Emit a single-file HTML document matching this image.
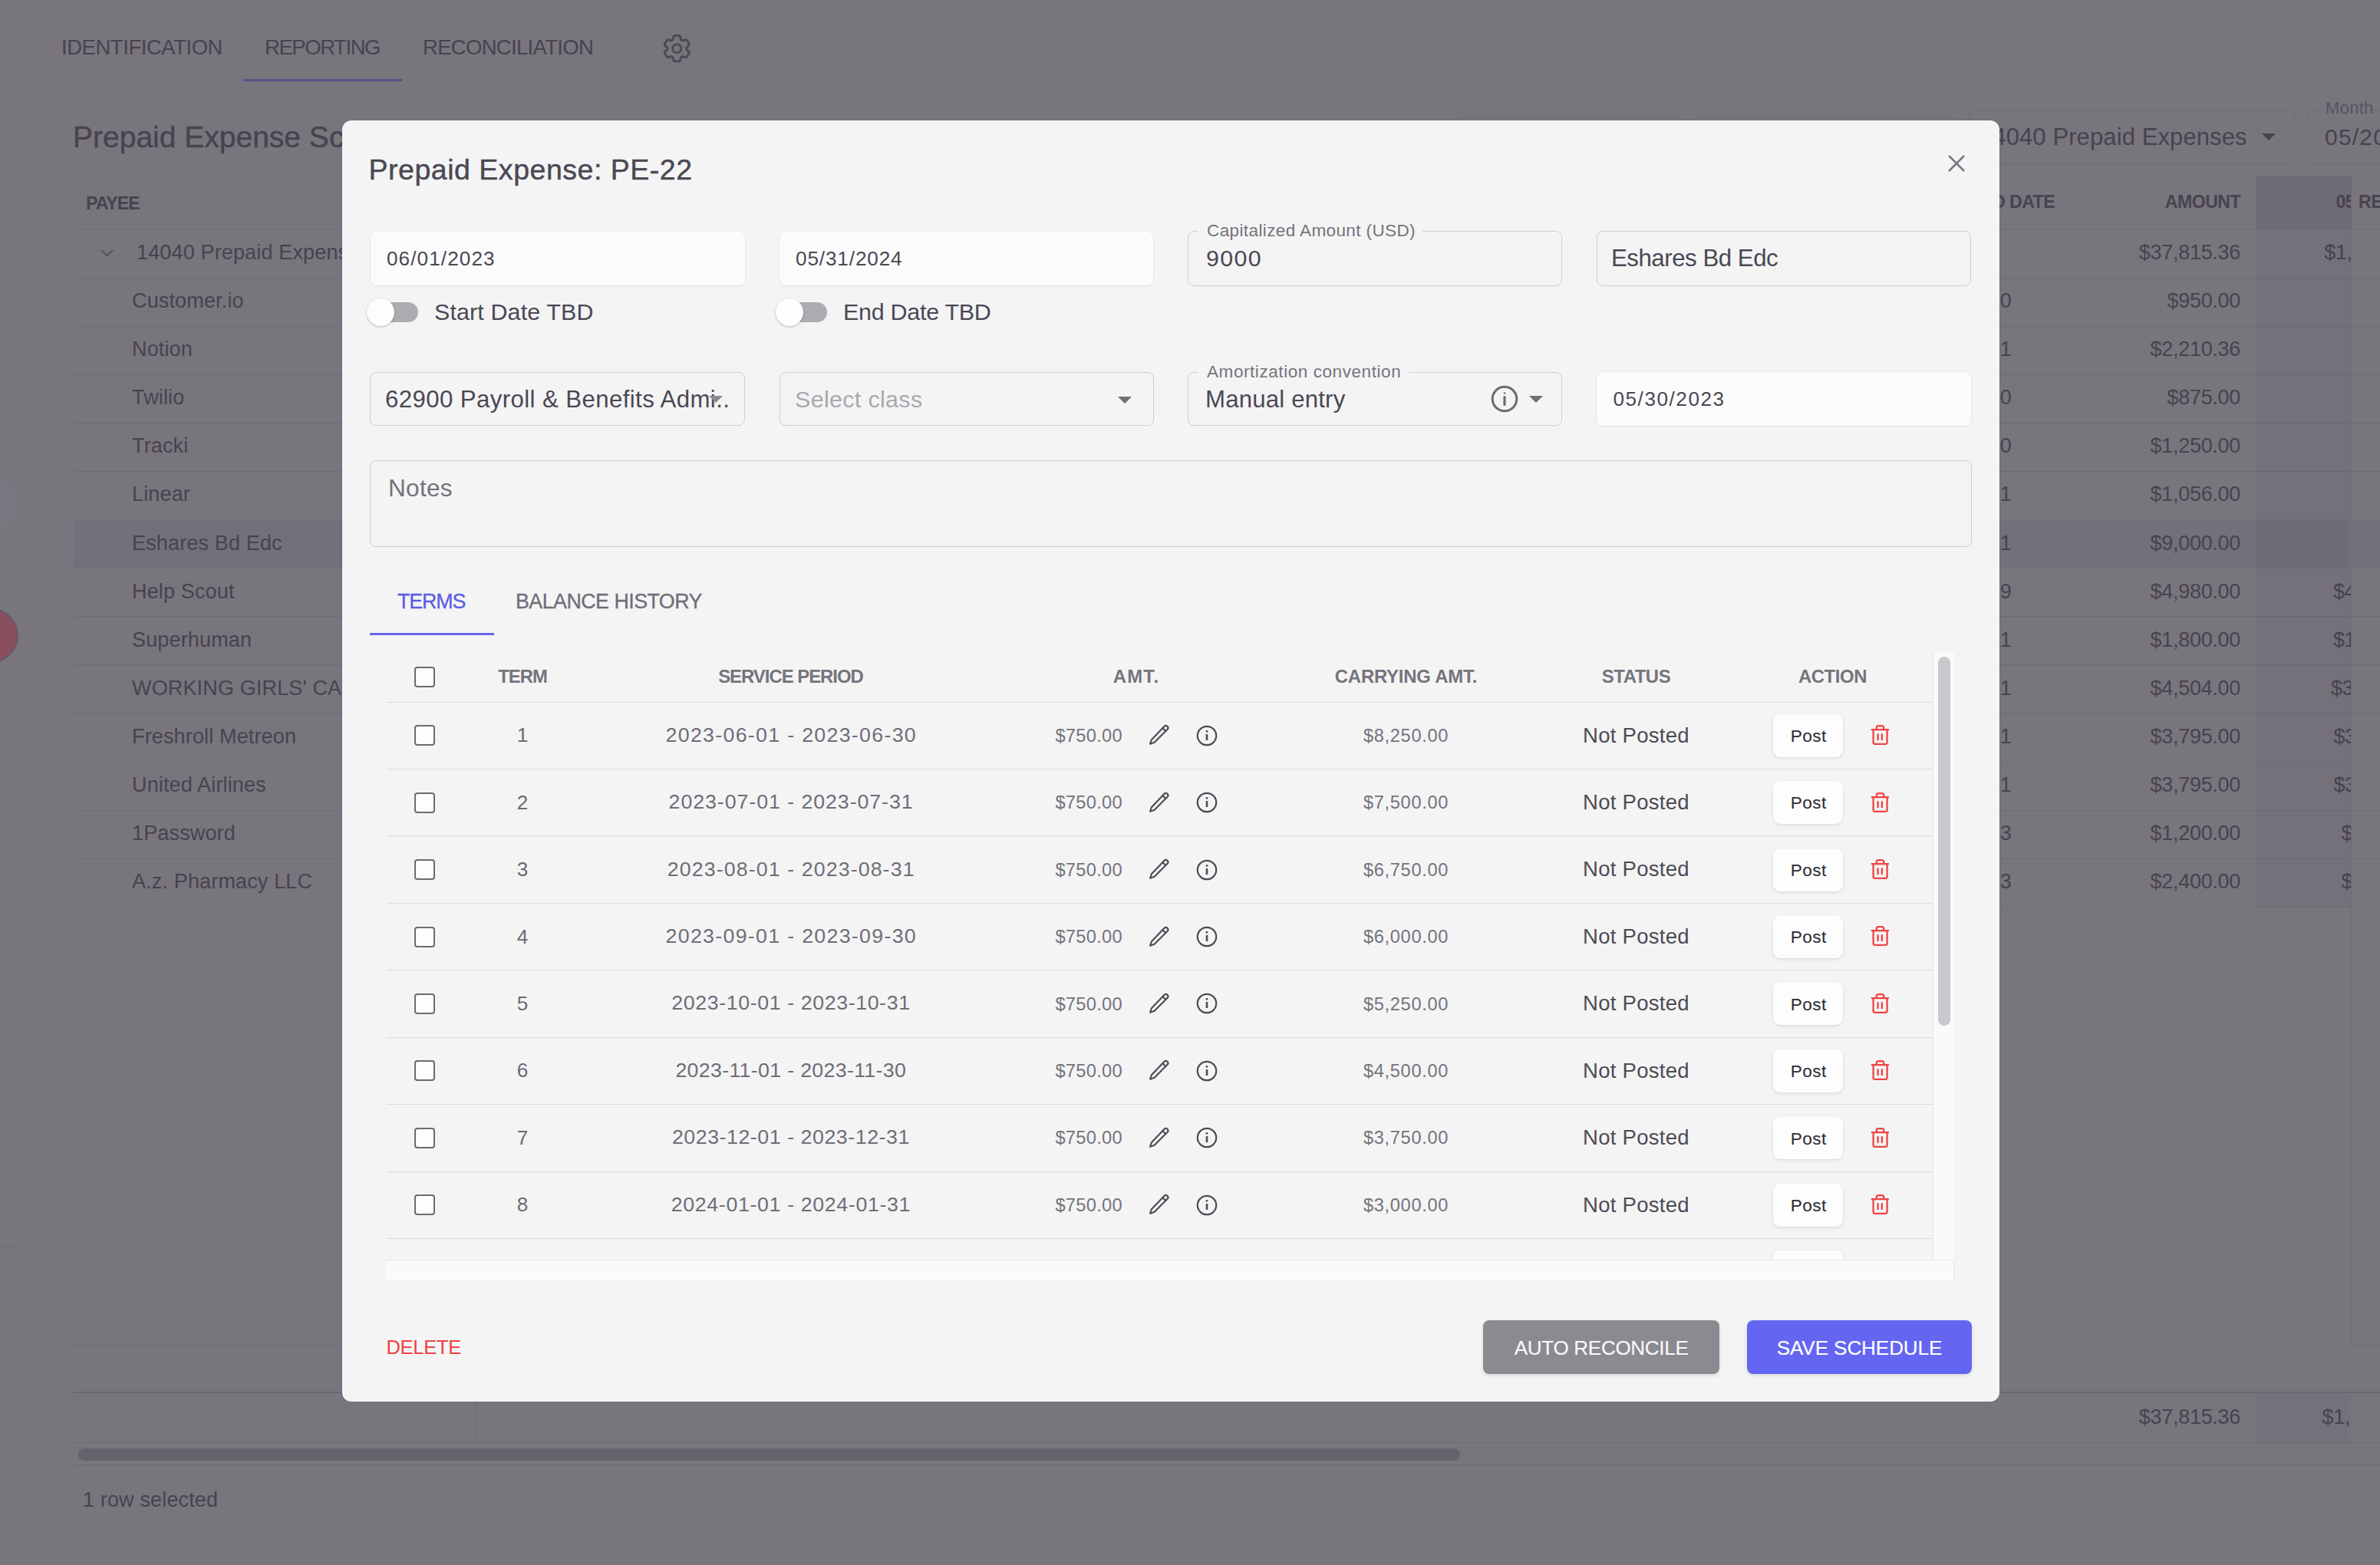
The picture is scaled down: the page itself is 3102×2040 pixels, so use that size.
<!DOCTYPE html>
<html><head><meta charset="utf-8"><style>
html,body{margin:0;padding:0;}
body{width:3102px;height:2040px;overflow:hidden;position:relative;background:#78757d;font-family:"Liberation Sans", sans-serif;}
.t{position:absolute;white-space:nowrap;line-height:1;}
.r{position:absolute;}
</style></head><body>
<div class="r" style="left:-20px;top:20px;width:29px;height:72px;border:1px solid #6f6c75;border-radius:10px;"></div>
<div class="r" style="left:-25px;top:619px;width:48px;height:70px;border-radius:50%;background:#7a7680;"></div>
<div class="r" style="left:-47px;top:792.5px;width:71px;height:71px;border-radius:50%;background:#8a4f5d;box-sizing:border-box;border:2px solid #66596a;"></div>
<div class="r" style="left:0px;top:1625px;width:24px;height:1px;background:#6f6c75;"></div>
<div class="t" style="font-size:27.5px;color:#47434f;letter-spacing:-0.46px;top:47.8px;left:80px;">IDENTIFICATION</div>
<div class="t" style="font-size:27.5px;color:#47434f;letter-spacing:-1.44px;top:47.8px;left:345px;">REPORTING</div>
<div class="t" style="font-size:27.5px;color:#47434f;letter-spacing:-0.69px;top:47.8px;left:551px;">RECONCILIATION</div>
<div class="r" style="left:317px;top:103px;width:207px;height:3px;background:#55518a;"></div>
<svg class="r" style="left:859.8px;top:41.2px;width:44.5px;height:44.5px" viewBox="0 0 24 24" fill="none" stroke="#4d4a55" stroke-width="1.6" stroke-linecap="round" stroke-linejoin="round"><path d="M9.594 3.94c.09-.542.56-.94 1.11-.94h2.593c.55 0 1.02.398 1.11.94l.213 1.281c.063.374.313.686.645.87.074.04.147.083.22.127.325.196.72.257 1.075.124l1.217-.456a1.125 1.125 0 0 1 1.37.49l1.296 2.247a1.125 1.125 0 0 1-.26 1.431l-1.003.827c-.293.241-.438.613-.43.992a7.723 7.723 0 0 1 0 .255c-.008.378.137.75.43.991l1.004.827c.424.35.534.955.26 1.43l-1.298 2.247a1.125 1.125 0 0 1-1.369.491l-1.217-.456c-.355-.133-.75-.072-1.076.124a6.47 6.47 0 0 1-.22.128c-.331.183-.581.495-.644.869l-.213 1.281c-.09.543-.56.94-1.11.94h-2.594c-.55 0-1.019-.398-1.11-.94l-.213-1.281c-.062-.374-.312-.686-.644-.87a6.52 6.52 0 0 1-.22-.127c-.325-.196-.72-.257-1.076-.124l-1.217.456a1.125 1.125 0 0 1-1.369-.49l-1.297-2.247a1.125 1.125 0 0 1 .26-1.431l1.004-.827c.292-.24.437-.613.43-.991a6.932 6.932 0 0 1 0-.255c.007-.38-.138-.751-.43-.992l-1.004-.827a1.125 1.125 0 0 1-.26-1.43l1.297-2.247a1.125 1.125 0 0 1 1.37-.491l1.216.456c.356.133.751.072 1.076-.124.072-.044.146-.086.22-.128.332-.183.582-.495.644-.869l.214-1.28Z"/><path d="M15 12a3 3 0 1 1-6 0 3 3 0 0 1 6 0Z"/></svg>
<div class="r" style="left:64px;top:123px;width:3200px;height:1900px;border-radius:14px;border:1px solid rgba(0,0,0,0.02);box-shadow:0 1px 3px rgba(0,0,0,0.03);"></div>
<div class="t" style="font-size:39px;color:#47434f;letter-spacing:0px;top:159.0px;-webkit-text-stroke:0.4px #47434f;left:95px;">Prepaid Expense Schedule</div>
<div class="r" style="left:1897px;top:152px;width:295px;height:60px;border:1px solid #6f6c75;border-radius:10px;"></div>
<div class="r" style="left:2207px;top:152px;width:344px;height:60px;border:1px solid #6f6c75;border-radius:10px;"></div>
<div class="r" style="left:2566px;top:143px;width:425px;height:70px;border:1px solid #6f6c75;border-radius:10px;"></div>
<div class="t" style="font-size:31px;color:#47434f;letter-spacing:0.1px;top:162.8px;left:2580px;">14040 Prepaid Expenses</div>
<div class="r" style="left:2948px;top:174px;width:0;height:0;border-left:9px solid transparent;border-right:9px solid transparent;border-top:9px solid #47434f;"></div>
<div class="r" style="left:3006px;top:143px;width:200px;height:70px;border:1px solid #6f6c75;border-radius:10px;"></div>
<div class="r" style="left:3025px;top:130px;width:62px;height:20px;background:#78757d;"></div>
<div class="t" style="font-size:22px;color:#57535f;letter-spacing:0.3px;top:130.4px;left:3031px;">Month</div>
<div class="t" style="font-size:30px;color:#47434f;letter-spacing:1.2px;top:163.7px;left:3030px;">05/2023</div>
<div class="r" style="left:96px;top:229px;width:3100px;height:1524px;border-top:1px solid rgba(0,0,0,0.03);border-left:1px solid rgba(0,0,0,0.03);border-radius:10px 0 0 0;"></div>
<div class="r" style="left:2940px;top:229px;width:124px;height:69px;background:#6f6b76;"></div>
<div class="r" style="left:3064px;top:229px;width:1px;height:1524px;background:#6f6c75;"></div>
<div class="t" style="font-size:23.2px;color:#47434f;letter-spacing:-1.0px;top:253.9px;font-weight:700;left:112px;">PAYEE</div>
<div class="t" style="font-size:23.2px;color:#47434f;letter-spacing:-0.6px;top:252.4px;font-weight:700;left:1478px;width:1200px;text-align:right;">END DATE</div>
<div class="t" style="font-size:23.2px;color:#47434f;letter-spacing:-0.6px;top:252.4px;font-weight:700;left:1720px;width:1200px;text-align:right;">AMOUNT</div>
<div class="r" style="left:2940px;top:229px;width:124px;height:69px;overflow:hidden">
<div class="t" style="font-size:23.2px;color:#47434f;letter-spacing:-0.6px;top:23.4px;font-weight:700;left:104.5px;">05/2023</div>
</div>
<div class="t" style="font-size:23.2px;color:#47434f;letter-spacing:-0.6px;top:252.4px;font-weight:700;left:3074px;">RECONCILED</div>
<div class="r" style="left:96px;top:298px;width:3100px;height:1px;background:#6f6c75;"></div>
<svg class="r" style="left:130px;top:324.4px;width:19px;height:12px" viewBox="0 0 19 12" fill="none" stroke="#57535f" stroke-width="2.2"><path d="M2 2l7.5 7.5L17 2"/></svg>
<div class="t" style="font-size:27px;color:#47434f;letter-spacing:0.15px;top:315.9px;left:178px;">14040 Prepaid Expenses</div>
<div class="t" style="font-size:27px;color:#47434f;letter-spacing:-0.3px;top:315.9px;left:1720px;width:1200px;text-align:right;">$37,815.36</div>
<div class="r" style="left:2940px;top:298.4px;width:124px;height:63.1px;overflow:hidden">
<div class="t" style="font-size:27px;color:#47434f;letter-spacing:-0.3px;top:17.5px;left:89.19999999999982px;">$1,750.00</div>
</div>
<div class="r" style="left:96px;top:361.5px;width:3100px;height:1px;background:#6f6c75;"></div>
<div class="t" style="font-size:27px;color:#47434f;letter-spacing:0.15px;top:379.0px;left:172px;">Customer.io</div>
<div class="t" style="font-size:27px;color:#47434f;letter-spacing:-0.3px;top:379.0px;left:1421.5px;width:1200px;text-align:right;">05/31/2020</div>
<div class="t" style="font-size:27px;color:#47434f;letter-spacing:-0.3px;top:379.0px;left:1720px;width:1200px;text-align:right;">$950.00</div>
<div class="r" style="left:96px;top:424.6px;width:3100px;height:1px;background:#6f6c75;"></div>
<div class="t" style="font-size:27px;color:#47434f;letter-spacing:0.15px;top:442.1px;left:172px;">Notion</div>
<div class="t" style="font-size:27px;color:#47434f;letter-spacing:-0.3px;top:442.1px;left:1421.5px;width:1200px;text-align:right;">05/31/2021</div>
<div class="t" style="font-size:27px;color:#47434f;letter-spacing:-0.3px;top:442.1px;left:1720px;width:1200px;text-align:right;">$2,210.36</div>
<div class="r" style="left:96px;top:487.7px;width:3100px;height:1px;background:#6f6c75;"></div>
<div class="t" style="font-size:27px;color:#47434f;letter-spacing:0.15px;top:505.2px;left:172px;">Twilio</div>
<div class="t" style="font-size:27px;color:#47434f;letter-spacing:-0.3px;top:505.2px;left:1421.5px;width:1200px;text-align:right;">05/31/2020</div>
<div class="t" style="font-size:27px;color:#47434f;letter-spacing:-0.3px;top:505.2px;left:1720px;width:1200px;text-align:right;">$875.00</div>
<div class="r" style="left:96px;top:550.8px;width:3100px;height:1px;background:#6f6c75;"></div>
<div class="t" style="font-size:27px;color:#47434f;letter-spacing:0.15px;top:568.3px;left:172px;">Tracki</div>
<div class="t" style="font-size:27px;color:#47434f;letter-spacing:-0.3px;top:568.3px;left:1421.5px;width:1200px;text-align:right;">05/31/2020</div>
<div class="t" style="font-size:27px;color:#47434f;letter-spacing:-0.3px;top:568.3px;left:1720px;width:1200px;text-align:right;">$1,250.00</div>
<div class="r" style="left:96px;top:613.9px;width:3100px;height:1px;background:#6f6c75;"></div>
<div class="t" style="font-size:27px;color:#47434f;letter-spacing:0.15px;top:631.4px;left:172px;">Linear</div>
<div class="t" style="font-size:27px;color:#47434f;letter-spacing:-0.3px;top:631.4px;left:1421.5px;width:1200px;text-align:right;">05/31/2021</div>
<div class="t" style="font-size:27px;color:#47434f;letter-spacing:-0.3px;top:631.4px;left:1720px;width:1200px;text-align:right;">$1,056.00</div>
<div class="r" style="left:96px;top:677.0px;width:3100px;height:1px;background:#6f6c75;"></div>
<div class="r" style="left:96px;top:677.0px;width:3100px;height:63.1px;background:#72707b;"></div>
<div class="t" style="font-size:27px;color:#47434f;letter-spacing:0.15px;top:694.5px;left:172px;">Eshares Bd Edc</div>
<div class="t" style="font-size:27px;color:#47434f;letter-spacing:-0.3px;top:694.5px;left:1421.5px;width:1200px;text-align:right;">05/31/2021</div>
<div class="t" style="font-size:27px;color:#47434f;letter-spacing:-0.3px;top:694.5px;left:1720px;width:1200px;text-align:right;">$9,000.00</div>
<div class="r" style="left:96px;top:740.1px;width:3100px;height:1px;background:#6f6c75;"></div>
<div class="t" style="font-size:27px;color:#47434f;letter-spacing:0.15px;top:757.6px;left:172px;">Help Scout</div>
<div class="t" style="font-size:27px;color:#47434f;letter-spacing:-0.3px;top:757.6px;left:1421.5px;width:1200px;text-align:right;">05/31/2029</div>
<div class="t" style="font-size:27px;color:#47434f;letter-spacing:-0.3px;top:757.6px;left:1720px;width:1200px;text-align:right;">$4,980.00</div>
<div class="r" style="left:2940px;top:740.1px;width:124px;height:63.1px;overflow:hidden">
<div class="t" style="font-size:27px;color:#47434f;letter-spacing:-0.3px;top:17.5px;left:100.90000000000009px;">$415.00</div>
</div>
<div class="r" style="left:96px;top:803.1999999999999px;width:3100px;height:1px;background:#6f6c75;"></div>
<div class="t" style="font-size:27px;color:#47434f;letter-spacing:0.15px;top:820.7px;left:172px;">Superhuman</div>
<div class="t" style="font-size:27px;color:#47434f;letter-spacing:-0.3px;top:820.7px;left:1421.5px;width:1200px;text-align:right;">05/31/2021</div>
<div class="t" style="font-size:27px;color:#47434f;letter-spacing:-0.3px;top:820.7px;left:1720px;width:1200px;text-align:right;">$1,800.00</div>
<div class="r" style="left:2940px;top:803.2px;width:124px;height:63.1px;overflow:hidden">
<div class="t" style="font-size:27px;color:#47434f;letter-spacing:-0.3px;top:17.5px;left:100.90000000000009px;">$150.00</div>
</div>
<div class="r" style="left:96px;top:866.3000000000001px;width:3100px;height:1px;background:#6f6c75;"></div>
<div class="t" style="font-size:27px;color:#47434f;letter-spacing:0.15px;top:883.8px;left:172px;">WORKING GIRLS&#x27; CAFE</div>
<div class="t" style="font-size:27px;color:#47434f;letter-spacing:-0.3px;top:883.8px;left:1421.5px;width:1200px;text-align:right;">05/31/2021</div>
<div class="t" style="font-size:27px;color:#47434f;letter-spacing:-0.3px;top:883.8px;left:1720px;width:1200px;text-align:right;">$4,504.00</div>
<div class="r" style="left:2940px;top:866.3px;width:124px;height:63.1px;overflow:hidden">
<div class="t" style="font-size:27px;color:#47434f;letter-spacing:-0.3px;top:17.5px;left:97.90000000000009px;">$375.33</div>
</div>
<div class="r" style="left:96px;top:929.4px;width:3100px;height:1px;background:#6f6c75;"></div>
<div class="t" style="font-size:27px;color:#47434f;letter-spacing:0.15px;top:946.9px;left:172px;">Freshroll Metreon</div>
<div class="t" style="font-size:27px;color:#47434f;letter-spacing:-0.3px;top:946.9px;left:1421.5px;width:1200px;text-align:right;">05/31/2021</div>
<div class="t" style="font-size:27px;color:#47434f;letter-spacing:-0.3px;top:946.9px;left:1720px;width:1200px;text-align:right;">$3,795.00</div>
<div class="r" style="left:2940px;top:929.4px;width:124px;height:63.1px;overflow:hidden">
<div class="t" style="font-size:27px;color:#47434f;letter-spacing:-0.3px;top:17.5px;left:101.40000000000009px;">$316.25</div>
</div>
<div class="r" style="left:96px;top:992.5px;width:3100px;height:1px;background:#6f6c75;"></div>
<div class="t" style="font-size:27px;color:#47434f;letter-spacing:0.15px;top:1010.0px;left:172px;">United Airlines</div>
<div class="t" style="font-size:27px;color:#47434f;letter-spacing:-0.3px;top:1010.0px;left:1421.5px;width:1200px;text-align:right;">05/31/2021</div>
<div class="t" style="font-size:27px;color:#47434f;letter-spacing:-0.3px;top:1010.0px;left:1720px;width:1200px;text-align:right;">$3,795.00</div>
<div class="r" style="left:2940px;top:992.5px;width:124px;height:63.1px;overflow:hidden">
<div class="t" style="font-size:27px;color:#47434f;letter-spacing:-0.3px;top:17.5px;left:101.40000000000009px;">$316.25</div>
</div>
<div class="r" style="left:96px;top:1055.6px;width:3100px;height:1px;background:#6f6c75;"></div>
<div class="t" style="font-size:27px;color:#47434f;letter-spacing:0.15px;top:1073.1px;left:172px;">1Password</div>
<div class="t" style="font-size:27px;color:#47434f;letter-spacing:-0.3px;top:1073.1px;left:1421.5px;width:1200px;text-align:right;">05/31/2023</div>
<div class="t" style="font-size:27px;color:#47434f;letter-spacing:-0.3px;top:1073.1px;left:1720px;width:1200px;text-align:right;">$1,200.00</div>
<div class="r" style="left:2940px;top:1055.6px;width:124px;height:63.1px;overflow:hidden">
<div class="t" style="font-size:27px;color:#47434f;letter-spacing:-0.3px;top:17.5px;left:111.5px;">$75.00</div>
</div>
<div class="r" style="left:96px;top:1118.6999999999998px;width:3100px;height:1px;background:#6f6c75;"></div>
<div class="t" style="font-size:27px;color:#47434f;letter-spacing:0.15px;top:1136.2px;left:172px;">A.z. Pharmacy LLC</div>
<div class="t" style="font-size:27px;color:#47434f;letter-spacing:-0.3px;top:1136.2px;left:1421.5px;width:1200px;text-align:right;">05/31/2023</div>
<div class="t" style="font-size:27px;color:#47434f;letter-spacing:-0.3px;top:1136.2px;left:1720px;width:1200px;text-align:right;">$2,400.00</div>
<div class="r" style="left:2940px;top:1118.7px;width:124px;height:63.1px;overflow:hidden">
<div class="t" style="font-size:27px;color:#47434f;letter-spacing:-0.3px;top:17.5px;left:111.5px;">$75.00</div>
</div>
<div class="r" style="left:96px;top:1181.8px;width:3100px;height:1px;background:#6f6c75;"></div>
<div class="r" style="left:2940px;top:298.4px;width:124px;height:883.4px;background:rgba(30,25,50,0.04);"></div>
<div class="r" style="left:96px;top:1753px;width:2510px;height:1px;background:#6f6c75;"></div>
<div class="r" style="left:3065px;top:1753px;width:40px;height:1px;background:#6f6c75;"></div>
<div class="r" style="left:96px;top:1814px;width:3100px;height:2px;background:#6a6671;"></div>
<div class="r" style="left:619px;top:1816px;width:1px;height:65px;background:#6f6c75;"></div>
<div class="r" style="left:2940px;top:1816px;width:124px;height:64px;background:rgba(30,25,50,0.04);"></div>
<div class="t" style="font-size:27px;color:#47434f;letter-spacing:-0.3px;top:1834.2px;left:1720px;width:1200px;text-align:right;">$37,815.36</div>
<div class="r" style="left:2940px;top:1816px;width:124px;height:64px;overflow:hidden">
<div class="t" style="font-size:27px;color:#47434f;letter-spacing:-0.3px;top:18.2px;left:86.5px;">$1,750.00</div>
</div>
<div class="r" style="left:96px;top:1880px;width:3100px;height:1px;background:#6f6c75;"></div>
<div class="r" style="left:102px;top:1888px;width:1801px;height:16px;background:#67636d;border-radius:8px;"></div>
<div class="r" style="left:96px;top:1909px;width:3100px;height:1px;background:#6f6c75;"></div>
<div class="t" style="font-size:27px;color:#47434f;letter-spacing:0.15px;top:1942.2px;left:108px;">1 row selected</div>
<div class="r" style="left:446px;top:157px;width:2160px;height:1670px;background:#f4f4f5;border-radius:12px;box-shadow:0 0 0 1px rgba(0,0,0,0.02);"></div>
<div class="t" style="font-size:37.5px;color:#4a4853;letter-spacing:0.52px;top:203.0px;-webkit-text-stroke:0.45px #4a4853;left:480.5px;">Prepaid Expense: PE-22</div>
<svg class="r" style="left:2538px;top:201px;width:24px;height:24px" viewBox="0 0 24 24" stroke="#78767e" stroke-width="2.6" stroke-linecap="butt"><path d="M2 2L22 22M22 2L2 22"/></svg>
<div class="r" style="left:483px;top:302px;width:488px;height:70px;background:#fbfbfb;border-radius:8px;box-shadow:0 0 0 1px rgba(0,0,0,0.025),0 1px 3px rgba(0,0,0,0.07);"></div>
<div class="t" style="font-size:26.1px;color:#4a4853;letter-spacing:1.11px;top:323.9px;left:504px;">06/01/2023</div>
<div class="r" style="left:1016px;top:302px;width:487px;height:70px;background:#fbfbfb;border-radius:8px;box-shadow:0 0 0 1px rgba(0,0,0,0.025),0 1px 3px rgba(0,0,0,0.07);"></div>
<div class="t" style="font-size:26.1px;color:#4a4853;letter-spacing:0.89px;top:323.9px;left:1037px;">05/31/2024</div>
<div class="r" style="left:1548px;top:301px;width:488px;height:72px;border:1.5px solid #cfced3;border-radius:8px;box-sizing:border-box;"></div>
<div class="r" style="left:1562px;top:298px;width:292px;height:6px;background:#f4f4f5;"></div>
<div class="t" style="font-size:22.5px;color:#75737b;letter-spacing:0.39px;top:289.5px;left:1573px;">Capitalized Amount (USD)</div>
<div class="t" style="font-size:30.4px;color:#4a4853;letter-spacing:1.33px;top:321.3px;left:1572px;">9000</div>
<div class="r" style="left:2081px;top:301px;width:488px;height:72px;border:1.5px solid #cfced3;border-radius:8px;box-sizing:border-box;"></div>
<div class="t" style="font-size:31.2px;color:#4a4853;letter-spacing:-0.46px;top:320.6px;left:2100px;">Eshares Bd Edc</div>
<div class="r" style="left:490px;top:394px;width:55px;height:26px;background:#adacb2;border-radius:13px;"></div>
<div class="r" style="left:478px;top:389px;width:36px;height:36px;background:#fdfdfd;border-radius:50%;box-shadow:0 1px 3px rgba(0,0,0,0.25);"></div>
<div class="t" style="font-size:30.4px;color:#4a4853;letter-spacing:0.15px;top:391.3px;left:566px;">Start Date TBD</div>
<div class="r" style="left:1023px;top:394px;width:55px;height:26px;background:#adacb2;border-radius:13px;"></div>
<div class="r" style="left:1011px;top:389px;width:36px;height:36px;background:#fdfdfd;border-radius:50%;box-shadow:0 1px 3px rgba(0,0,0,0.25);"></div>
<div class="t" style="font-size:30.4px;color:#4a4853;letter-spacing:-0.24px;top:391.3px;left:1099px;">End Date TBD</div>
<div class="r" style="left:482px;top:485px;width:489px;height:70px;border:1.5px solid #cfced3;border-radius:8px;box-sizing:border-box;"></div>
<div class="t" style="font-size:31.2px;color:#4a4853;letter-spacing:0.4px;top:504.6px;left:502px;">62900 Payroll &amp; Benefits Admi..</div>
<div class="r" style="left:924px;top:515.5px;width:0;height:0;border-left:9px solid transparent;border-right:9px solid transparent;border-top:9px solid #8a8890;"></div>
<div class="r" style="left:1016px;top:485px;width:488px;height:70px;border:1.5px solid #cfced3;border-radius:8px;box-sizing:border-box;"></div>
<div class="t" style="font-size:30.4px;color:#a9a8ae;letter-spacing:0.36px;top:505.3px;left:1036px;">Select class</div>
<div class="r" style="left:1457px;top:516.5px;width:0;height:0;border-left:9px solid transparent;border-right:9px solid transparent;border-top:9px solid #6f6d76;"></div>
<div class="r" style="left:1548px;top:485px;width:488px;height:70px;border:1.5px solid #cfced3;border-radius:8px;box-sizing:border-box;"></div>
<div class="r" style="left:1562px;top:482px;width:274px;height:6px;background:#f4f4f5;"></div>
<div class="t" style="font-size:22.5px;color:#75737b;letter-spacing:0.57px;top:473.5px;left:1573px;">Amortization convention</div>
<div class="t" style="font-size:31.2px;color:#4a4853;letter-spacing:0.18px;top:504.6px;left:1571px;">Manual entry</div>
<svg class="r" style="left:1943px;top:502px;width:36px;height:36px" viewBox="0 0 36 36" fill="none" stroke="#6c6a72" stroke-width="3"><circle cx="18" cy="18" r="15.8"/><path d="M18 15.5V25.5" stroke-width="3.2" stroke-linecap="round"/><circle cx="18" cy="10.5" r="1.3" fill="#6c6a72" stroke="none"/></svg>
<div class="r" style="left:1993px;top:515.5px;width:0;height:0;border-left:9px solid transparent;border-right:9px solid transparent;border-top:9px solid #6f6d76;"></div>
<div class="r" style="left:2081px;top:485px;width:488px;height:70px;background:#fbfbfb;border-radius:8px;box-shadow:0 0 0 1px rgba(0,0,0,0.025),0 1px 3px rgba(0,0,0,0.07);"></div>
<div class="t" style="font-size:26.1px;color:#4a4853;letter-spacing:1.55px;top:506.9px;left:2102.5px;">05/30/2023</div>
<div class="r" style="left:482px;top:600px;width:2088px;height:113px;border:1.5px solid #cfced3;border-radius:8px;box-sizing:border-box;"></div>
<div class="t" style="font-size:31.6px;color:#75737b;letter-spacing:0.25px;top:621.3px;left:506px;">Notes</div>
<div class="t" style="font-size:26.8px;color:#5b5ce2;letter-spacing:-1.1px;top:770.9px;-webkit-text-stroke:0.3px #5b5ce2;left:518px;">TERMS</div>
<div class="t" style="font-size:26.8px;color:#6f6d76;letter-spacing:-0.52px;top:770.9px;-webkit-text-stroke:0.3px #6f6d76;left:672px;">BALANCE HISTORY</div>
<div class="r" style="left:482px;top:825px;width:162px;height:3px;background:#6466f1;"></div>
<div class="r" style="left:504px;top:850px;width:2015px;height:792px;overflow:hidden">
<div class="r" style="left:36px;top:19px;width:27px;height:27px;border:2.2px solid #6c6a72;border-radius:4px;background:#fdfdfd;box-sizing:border-box;"></div>
<div class="t" style="font-size:23.9px;color:#75737b;letter-spacing:-1.0px;top:20.3px;font-weight:700;left:-423px;width:1200px;text-align:center;">TERM</div>
<div class="t" style="font-size:23.9px;color:#75737b;letter-spacing:-1.0px;top:20.3px;font-weight:700;left:-73.5px;width:1200px;text-align:center;">SERVICE PERIOD</div>
<div class="t" style="font-size:23.9px;color:#75737b;letter-spacing:1.2px;top:20.3px;font-weight:700;left:377px;width:1200px;text-align:center;">AMT.</div>
<div class="t" style="font-size:23.9px;color:#75737b;letter-spacing:-0.2px;top:20.3px;font-weight:700;left:728.5px;width:1200px;text-align:center;">CARRYING AMT.</div>
<div class="t" style="font-size:23.9px;color:#75737b;letter-spacing:-0.46px;top:20.3px;font-weight:700;left:1028.5px;width:1200px;text-align:center;">STATUS</div>
<div class="t" style="font-size:23.9px;color:#75737b;letter-spacing:-0.4px;top:20.3px;font-weight:700;left:1284.5px;width:1200px;text-align:center;">ACTION</div>
<div class="r" style="left:0px;top:64.5px;width:2015px;height:1px;background:#dcdcdf;"></div>
<div class="r" style="left:36px;top:95.21500000000003px;width:27px;height:27px;border:2.2px solid #6c6a72;border-radius:4px;background:#fdfdfd;box-sizing:border-box;"></div>
<div class="t" style="font-size:26.1px;color:#6c6a72;letter-spacing:0px;top:95.2px;left:-423px;width:1200px;text-align:center;">1</div>
<div class="t" style="font-size:26.7px;color:#6f6d76;letter-spacing:1.336px;top:94.7px;left:-72.7318181818182px;width:1200px;text-align:center;">2023-06-01 - 2023-06-30</div>
<div class="t" style="font-size:23.6px;color:#75737b;letter-spacing:0.33px;top:97.8px;left:-241px;width:1200px;text-align:right;">$750.00</div>
<svg class="r" style="left:990.5px;top:92.2px;width:32px;height:32px" viewBox="0 0 24 24" fill="none" stroke="#4d4b54" stroke-width="1.6" stroke-linejoin="round" stroke-linecap="round"><path d="M16.9 3.6a2.1 2.1 0 0 1 3 3L7.2 19.3 3 20.8l1.4-4.1z"/><path d="M15.2 5.3l3 3"/></svg>
<svg class="r" style="left:1054px;top:93.7px;width:30px;height:30px" viewBox="0 0 30 30" fill="none" stroke="#4d4b54" stroke-width="2.2"><circle cx="15" cy="15" r="12.2"/><path d="M15 13v8" stroke-width="2.6"/><circle cx="15" cy="9.3" r="1.4" fill="#4d4b54" stroke="none"/></svg>
<div class="t" style="font-size:23.6px;color:#75737b;letter-spacing:0.69px;top:97.8px;left:728.5px;width:1200px;text-align:center;">$8,250.00</div>
<div class="t" style="font-size:27.5px;color:#4d4b54;letter-spacing:0.28px;top:94.5px;left:1028.5px;width:1200px;text-align:center;">Not Posted</div>
<div class="r" style="left:1807px;top:80.71500000000003px;width:91px;height:56px;background:#fdfdfd;border-radius:9px;box-shadow:0 0 0 1px rgba(0,0,0,0.02),0 2px 4px rgba(0,0,0,0.08);"></div>
<div class="t" style="font-size:22.6px;color:#302e39;letter-spacing:0.5px;top:98.9px;-webkit-text-stroke:0.1px #302e39;left:1253.3000000000002px;width:1200px;text-align:center;">Post</div>
<svg class="r" style="left:1932px;top:93.1px;width:28px;height:30px" viewBox="0 0 28 30" fill="none" stroke="#ef4444" stroke-width="2.3" stroke-linejoin="round"><path d="M2.8 8.1H25.9"/><path d="M9.8 8V5.6a2.4 2.4 0 0 1 2.4-2.4h4.6a2.4 2.4 0 0 1 2.4 2.4V8"/><path d="M5.6 8.1V24.8a2 2 0 0 0 2 2h14a2 2 0 0 0 2-2V8.1"/><path d="M11.6 13.2v8.8M16.9 13.2v8.8"/></svg>
<div class="r" style="left:0px;top:151.93000000000006px;width:2015px;height:1px;background:#dcdcdf;"></div>
<div class="r" style="left:36px;top:182.64499999999998px;width:27px;height:27px;border:2.2px solid #6c6a72;border-radius:4px;background:#fdfdfd;box-sizing:border-box;"></div>
<div class="t" style="font-size:26.1px;color:#6c6a72;letter-spacing:0px;top:182.6px;left:-423px;width:1200px;text-align:center;">2</div>
<div class="t" style="font-size:26.7px;color:#6f6d76;letter-spacing:0.968px;top:182.1px;left:-72.91590909090928px;width:1200px;text-align:center;">2023-07-01 - 2023-07-31</div>
<div class="t" style="font-size:23.6px;color:#75737b;letter-spacing:0.33px;top:185.2px;left:-241px;width:1200px;text-align:right;">$750.00</div>
<svg class="r" style="left:990.5px;top:179.6px;width:32px;height:32px" viewBox="0 0 24 24" fill="none" stroke="#4d4b54" stroke-width="1.6" stroke-linejoin="round" stroke-linecap="round"><path d="M16.9 3.6a2.1 2.1 0 0 1 3 3L7.2 19.3 3 20.8l1.4-4.1z"/><path d="M15.2 5.3l3 3"/></svg>
<svg class="r" style="left:1054px;top:181.1px;width:30px;height:30px" viewBox="0 0 30 30" fill="none" stroke="#4d4b54" stroke-width="2.2"><circle cx="15" cy="15" r="12.2"/><path d="M15 13v8" stroke-width="2.6"/><circle cx="15" cy="9.3" r="1.4" fill="#4d4b54" stroke="none"/></svg>
<div class="t" style="font-size:23.6px;color:#75737b;letter-spacing:0.69px;top:185.2px;left:728.5px;width:1200px;text-align:center;">$7,500.00</div>
<div class="t" style="font-size:27.5px;color:#4d4b54;letter-spacing:0.28px;top:181.9px;left:1028.5px;width:1200px;text-align:center;">Not Posted</div>
<div class="r" style="left:1807px;top:168.14499999999998px;width:91px;height:56px;background:#fdfdfd;border-radius:9px;box-shadow:0 0 0 1px rgba(0,0,0,0.02),0 2px 4px rgba(0,0,0,0.08);"></div>
<div class="t" style="font-size:22.6px;color:#302e39;letter-spacing:0.5px;top:186.3px;-webkit-text-stroke:0.1px #302e39;left:1253.3000000000002px;width:1200px;text-align:center;">Post</div>
<svg class="r" style="left:1932px;top:180.5px;width:28px;height:30px" viewBox="0 0 28 30" fill="none" stroke="#ef4444" stroke-width="2.3" stroke-linejoin="round"><path d="M2.8 8.1H25.9"/><path d="M9.8 8V5.6a2.4 2.4 0 0 1 2.4-2.4h4.6a2.4 2.4 0 0 1 2.4 2.4V8"/><path d="M5.6 8.1V24.8a2 2 0 0 0 2 2h14a2 2 0 0 0 2-2V8.1"/><path d="M11.6 13.2v8.8M16.9 13.2v8.8"/></svg>
<div class="r" style="left:0px;top:239.36000000000013px;width:2015px;height:1px;background:#dcdcdf;"></div>
<div class="r" style="left:36px;top:270.07500000000005px;width:27px;height:27px;border:2.2px solid #6c6a72;border-radius:4px;background:#fdfdfd;box-sizing:border-box;"></div>
<div class="t" style="font-size:26.1px;color:#6c6a72;letter-spacing:0px;top:270.0px;left:-423px;width:1200px;text-align:center;">3</div>
<div class="t" style="font-size:26.7px;color:#6f6d76;letter-spacing:1.136px;top:269.5px;left:-72.83181818181833px;width:1200px;text-align:center;">2023-08-01 - 2023-08-31</div>
<div class="t" style="font-size:23.6px;color:#75737b;letter-spacing:0.33px;top:272.6px;left:-241px;width:1200px;text-align:right;">$750.00</div>
<svg class="r" style="left:990.5px;top:267.1px;width:32px;height:32px" viewBox="0 0 24 24" fill="none" stroke="#4d4b54" stroke-width="1.6" stroke-linejoin="round" stroke-linecap="round"><path d="M16.9 3.6a2.1 2.1 0 0 1 3 3L7.2 19.3 3 20.8l1.4-4.1z"/><path d="M15.2 5.3l3 3"/></svg>
<svg class="r" style="left:1054px;top:268.6px;width:30px;height:30px" viewBox="0 0 30 30" fill="none" stroke="#4d4b54" stroke-width="2.2"><circle cx="15" cy="15" r="12.2"/><path d="M15 13v8" stroke-width="2.6"/><circle cx="15" cy="9.3" r="1.4" fill="#4d4b54" stroke="none"/></svg>
<div class="t" style="font-size:23.6px;color:#75737b;letter-spacing:0.69px;top:272.6px;left:728.5px;width:1200px;text-align:center;">$6,750.00</div>
<div class="t" style="font-size:27.5px;color:#4d4b54;letter-spacing:0.28px;top:269.3px;left:1028.5px;width:1200px;text-align:center;">Not Posted</div>
<div class="r" style="left:1807px;top:255.57500000000005px;width:91px;height:56px;background:#fdfdfd;border-radius:9px;box-shadow:0 0 0 1px rgba(0,0,0,0.02),0 2px 4px rgba(0,0,0,0.08);"></div>
<div class="t" style="font-size:22.6px;color:#302e39;letter-spacing:0.5px;top:273.8px;-webkit-text-stroke:0.1px #302e39;left:1253.3000000000002px;width:1200px;text-align:center;">Post</div>
<svg class="r" style="left:1932px;top:268.0px;width:28px;height:30px" viewBox="0 0 28 30" fill="none" stroke="#ef4444" stroke-width="2.3" stroke-linejoin="round"><path d="M2.8 8.1H25.9"/><path d="M9.8 8V5.6a2.4 2.4 0 0 1 2.4-2.4h4.6a2.4 2.4 0 0 1 2.4 2.4V8"/><path d="M5.6 8.1V24.8a2 2 0 0 0 2 2h14a2 2 0 0 0 2-2V8.1"/><path d="M11.6 13.2v8.8M16.9 13.2v8.8"/></svg>
<div class="r" style="left:0px;top:326.7900000000002px;width:2015px;height:1px;background:#dcdcdf;"></div>
<div class="r" style="left:36px;top:357.5049999999999px;width:27px;height:27px;border:2.2px solid #6c6a72;border-radius:4px;background:#fdfdfd;box-sizing:border-box;"></div>
<div class="t" style="font-size:26.1px;color:#6c6a72;letter-spacing:0px;top:357.5px;left:-423px;width:1200px;text-align:center;">4</div>
<div class="t" style="font-size:26.7px;color:#6f6d76;letter-spacing:1.336px;top:356.9px;left:-72.7318181818182px;width:1200px;text-align:center;">2023-09-01 - 2023-09-30</div>
<div class="t" style="font-size:23.6px;color:#75737b;letter-spacing:0.33px;top:360.1px;left:-241px;width:1200px;text-align:right;">$750.00</div>
<svg class="r" style="left:990.5px;top:354.5px;width:32px;height:32px" viewBox="0 0 24 24" fill="none" stroke="#4d4b54" stroke-width="1.6" stroke-linejoin="round" stroke-linecap="round"><path d="M16.9 3.6a2.1 2.1 0 0 1 3 3L7.2 19.3 3 20.8l1.4-4.1z"/><path d="M15.2 5.3l3 3"/></svg>
<svg class="r" style="left:1054px;top:356.0px;width:30px;height:30px" viewBox="0 0 30 30" fill="none" stroke="#4d4b54" stroke-width="2.2"><circle cx="15" cy="15" r="12.2"/><path d="M15 13v8" stroke-width="2.6"/><circle cx="15" cy="9.3" r="1.4" fill="#4d4b54" stroke="none"/></svg>
<div class="t" style="font-size:23.6px;color:#75737b;letter-spacing:0.69px;top:360.1px;left:728.5px;width:1200px;text-align:center;">$6,000.00</div>
<div class="t" style="font-size:27.5px;color:#4d4b54;letter-spacing:0.28px;top:356.8px;left:1028.5px;width:1200px;text-align:center;">Not Posted</div>
<div class="r" style="left:1807px;top:343.0049999999999px;width:91px;height:56px;background:#fdfdfd;border-radius:9px;box-shadow:0 0 0 1px rgba(0,0,0,0.02),0 2px 4px rgba(0,0,0,0.08);"></div>
<div class="t" style="font-size:22.6px;color:#302e39;letter-spacing:0.5px;top:361.2px;-webkit-text-stroke:0.1px #302e39;left:1253.3000000000002px;width:1200px;text-align:center;">Post</div>
<svg class="r" style="left:1932px;top:355.4px;width:28px;height:30px" viewBox="0 0 28 30" fill="none" stroke="#ef4444" stroke-width="2.3" stroke-linejoin="round"><path d="M2.8 8.1H25.9"/><path d="M9.8 8V5.6a2.4 2.4 0 0 1 2.4-2.4h4.6a2.4 2.4 0 0 1 2.4 2.4V8"/><path d="M5.6 8.1V24.8a2 2 0 0 0 2 2h14a2 2 0 0 0 2-2V8.1"/><path d="M11.6 13.2v8.8M16.9 13.2v8.8"/></svg>
<div class="r" style="left:0px;top:414.22px;width:2015px;height:1px;background:#dcdcdf;"></div>
<div class="r" style="left:36px;top:444.93499999999995px;width:27px;height:27px;border:2.2px solid #6c6a72;border-radius:4px;background:#fdfdfd;box-sizing:border-box;"></div>
<div class="t" style="font-size:26.1px;color:#6c6a72;letter-spacing:0px;top:444.9px;left:-423px;width:1200px;text-align:center;">5</div>
<div class="t" style="font-size:26.7px;color:#6f6d76;letter-spacing:0.636px;top:444.4px;left:-73.08181818181833px;width:1200px;text-align:center;">2023-10-01 - 2023-10-31</div>
<div class="t" style="font-size:23.6px;color:#75737b;letter-spacing:0.33px;top:447.5px;left:-241px;width:1200px;text-align:right;">$750.00</div>
<svg class="r" style="left:990.5px;top:441.9px;width:32px;height:32px" viewBox="0 0 24 24" fill="none" stroke="#4d4b54" stroke-width="1.6" stroke-linejoin="round" stroke-linecap="round"><path d="M16.9 3.6a2.1 2.1 0 0 1 3 3L7.2 19.3 3 20.8l1.4-4.1z"/><path d="M15.2 5.3l3 3"/></svg>
<svg class="r" style="left:1054px;top:443.4px;width:30px;height:30px" viewBox="0 0 30 30" fill="none" stroke="#4d4b54" stroke-width="2.2"><circle cx="15" cy="15" r="12.2"/><path d="M15 13v8" stroke-width="2.6"/><circle cx="15" cy="9.3" r="1.4" fill="#4d4b54" stroke="none"/></svg>
<div class="t" style="font-size:23.6px;color:#75737b;letter-spacing:0.69px;top:447.5px;left:728.5px;width:1200px;text-align:center;">$5,250.00</div>
<div class="t" style="font-size:27.5px;color:#4d4b54;letter-spacing:0.28px;top:444.2px;left:1028.5px;width:1200px;text-align:center;">Not Posted</div>
<div class="r" style="left:1807px;top:430.43499999999995px;width:91px;height:56px;background:#fdfdfd;border-radius:9px;box-shadow:0 0 0 1px rgba(0,0,0,0.02),0 2px 4px rgba(0,0,0,0.08);"></div>
<div class="t" style="font-size:22.6px;color:#302e39;letter-spacing:0.5px;top:448.6px;-webkit-text-stroke:0.1px #302e39;left:1253.3000000000002px;width:1200px;text-align:center;">Post</div>
<svg class="r" style="left:1932px;top:442.8px;width:28px;height:30px" viewBox="0 0 28 30" fill="none" stroke="#ef4444" stroke-width="2.3" stroke-linejoin="round"><path d="M2.8 8.1H25.9"/><path d="M9.8 8V5.6a2.4 2.4 0 0 1 2.4-2.4h4.6a2.4 2.4 0 0 1 2.4 2.4V8"/><path d="M5.6 8.1V24.8a2 2 0 0 0 2 2h14a2 2 0 0 0 2-2V8.1"/><path d="M11.6 13.2v8.8M16.9 13.2v8.8"/></svg>
<div class="r" style="left:0px;top:501.6500000000001px;width:2015px;height:1px;background:#dcdcdf;"></div>
<div class="r" style="left:36px;top:532.365px;width:27px;height:27px;border:2.2px solid #6c6a72;border-radius:4px;background:#fdfdfd;box-sizing:border-box;"></div>
<div class="t" style="font-size:26.1px;color:#6c6a72;letter-spacing:0px;top:532.3px;left:-423px;width:1200px;text-align:center;">6</div>
<div class="t" style="font-size:26.7px;color:#6f6d76;letter-spacing:0.345px;top:531.8px;left:-73.22727272727275px;width:1200px;text-align:center;">2023-11-01 - 2023-11-30</div>
<div class="t" style="font-size:23.6px;color:#75737b;letter-spacing:0.33px;top:534.9px;left:-241px;width:1200px;text-align:right;">$750.00</div>
<svg class="r" style="left:990.5px;top:529.4px;width:32px;height:32px" viewBox="0 0 24 24" fill="none" stroke="#4d4b54" stroke-width="1.6" stroke-linejoin="round" stroke-linecap="round"><path d="M16.9 3.6a2.1 2.1 0 0 1 3 3L7.2 19.3 3 20.8l1.4-4.1z"/><path d="M15.2 5.3l3 3"/></svg>
<svg class="r" style="left:1054px;top:530.9px;width:30px;height:30px" viewBox="0 0 30 30" fill="none" stroke="#4d4b54" stroke-width="2.2"><circle cx="15" cy="15" r="12.2"/><path d="M15 13v8" stroke-width="2.6"/><circle cx="15" cy="9.3" r="1.4" fill="#4d4b54" stroke="none"/></svg>
<div class="t" style="font-size:23.6px;color:#75737b;letter-spacing:0.69px;top:534.9px;left:728.5px;width:1200px;text-align:center;">$4,500.00</div>
<div class="t" style="font-size:27.5px;color:#4d4b54;letter-spacing:0.28px;top:531.6px;left:1028.5px;width:1200px;text-align:center;">Not Posted</div>
<div class="r" style="left:1807px;top:517.865px;width:91px;height:56px;background:#fdfdfd;border-radius:9px;box-shadow:0 0 0 1px rgba(0,0,0,0.02),0 2px 4px rgba(0,0,0,0.08);"></div>
<div class="t" style="font-size:22.6px;color:#302e39;letter-spacing:0.5px;top:536.1px;-webkit-text-stroke:0.1px #302e39;left:1253.3000000000002px;width:1200px;text-align:center;">Post</div>
<svg class="r" style="left:1932px;top:530.3px;width:28px;height:30px" viewBox="0 0 28 30" fill="none" stroke="#ef4444" stroke-width="2.3" stroke-linejoin="round"><path d="M2.8 8.1H25.9"/><path d="M9.8 8V5.6a2.4 2.4 0 0 1 2.4-2.4h4.6a2.4 2.4 0 0 1 2.4 2.4V8"/><path d="M5.6 8.1V24.8a2 2 0 0 0 2 2h14a2 2 0 0 0 2-2V8.1"/><path d="M11.6 13.2v8.8M16.9 13.2v8.8"/></svg>
<div class="r" style="left:0px;top:589.0800000000002px;width:2015px;height:1px;background:#dcdcdf;"></div>
<div class="r" style="left:36px;top:619.7949999999998px;width:27px;height:27px;border:2.2px solid #6c6a72;border-radius:4px;background:#fdfdfd;box-sizing:border-box;"></div>
<div class="t" style="font-size:26.1px;color:#6c6a72;letter-spacing:0px;top:619.7px;left:-423px;width:1200px;text-align:center;">7</div>
<div class="t" style="font-size:26.7px;color:#6f6d76;letter-spacing:0.573px;top:619.2px;left:-73.11363636363649px;width:1200px;text-align:center;">2023-12-01 - 2023-12-31</div>
<div class="t" style="font-size:23.6px;color:#75737b;letter-spacing:0.33px;top:622.4px;left:-241px;width:1200px;text-align:right;">$750.00</div>
<svg class="r" style="left:990.5px;top:616.8px;width:32px;height:32px" viewBox="0 0 24 24" fill="none" stroke="#4d4b54" stroke-width="1.6" stroke-linejoin="round" stroke-linecap="round"><path d="M16.9 3.6a2.1 2.1 0 0 1 3 3L7.2 19.3 3 20.8l1.4-4.1z"/><path d="M15.2 5.3l3 3"/></svg>
<svg class="r" style="left:1054px;top:618.3px;width:30px;height:30px" viewBox="0 0 30 30" fill="none" stroke="#4d4b54" stroke-width="2.2"><circle cx="15" cy="15" r="12.2"/><path d="M15 13v8" stroke-width="2.6"/><circle cx="15" cy="9.3" r="1.4" fill="#4d4b54" stroke="none"/></svg>
<div class="t" style="font-size:23.6px;color:#75737b;letter-spacing:0.69px;top:622.4px;left:728.5px;width:1200px;text-align:center;">$3,750.00</div>
<div class="t" style="font-size:27.5px;color:#4d4b54;letter-spacing:0.28px;top:619.1px;left:1028.5px;width:1200px;text-align:center;">Not Posted</div>
<div class="r" style="left:1807px;top:605.2949999999998px;width:91px;height:56px;background:#fdfdfd;border-radius:9px;box-shadow:0 0 0 1px rgba(0,0,0,0.02),0 2px 4px rgba(0,0,0,0.08);"></div>
<div class="t" style="font-size:22.6px;color:#302e39;letter-spacing:0.5px;top:623.5px;-webkit-text-stroke:0.1px #302e39;left:1253.3000000000002px;width:1200px;text-align:center;">Post</div>
<svg class="r" style="left:1932px;top:617.7px;width:28px;height:30px" viewBox="0 0 28 30" fill="none" stroke="#ef4444" stroke-width="2.3" stroke-linejoin="round"><path d="M2.8 8.1H25.9"/><path d="M9.8 8V5.6a2.4 2.4 0 0 1 2.4-2.4h4.6a2.4 2.4 0 0 1 2.4 2.4V8"/><path d="M5.6 8.1V24.8a2 2 0 0 0 2 2h14a2 2 0 0 0 2-2V8.1"/><path d="M11.6 13.2v8.8M16.9 13.2v8.8"/></svg>
<div class="r" style="left:0px;top:676.51px;width:2015px;height:1px;background:#dcdcdf;"></div>
<div class="r" style="left:36px;top:707.2249999999999px;width:27px;height:27px;border:2.2px solid #6c6a72;border-radius:4px;background:#fdfdfd;box-sizing:border-box;"></div>
<div class="t" style="font-size:26.1px;color:#6c6a72;letter-spacing:0px;top:707.2px;left:-423px;width:1200px;text-align:center;">8</div>
<div class="t" style="font-size:26.7px;color:#6f6d76;letter-spacing:0.673px;top:706.7px;left:-73.06363636363653px;width:1200px;text-align:center;">2024-01-01 - 2024-01-31</div>
<div class="t" style="font-size:23.6px;color:#75737b;letter-spacing:0.33px;top:709.8px;left:-241px;width:1200px;text-align:right;">$750.00</div>
<svg class="r" style="left:990.5px;top:704.2px;width:32px;height:32px" viewBox="0 0 24 24" fill="none" stroke="#4d4b54" stroke-width="1.6" stroke-linejoin="round" stroke-linecap="round"><path d="M16.9 3.6a2.1 2.1 0 0 1 3 3L7.2 19.3 3 20.8l1.4-4.1z"/><path d="M15.2 5.3l3 3"/></svg>
<svg class="r" style="left:1054px;top:705.7px;width:30px;height:30px" viewBox="0 0 30 30" fill="none" stroke="#4d4b54" stroke-width="2.2"><circle cx="15" cy="15" r="12.2"/><path d="M15 13v8" stroke-width="2.6"/><circle cx="15" cy="9.3" r="1.4" fill="#4d4b54" stroke="none"/></svg>
<div class="t" style="font-size:23.6px;color:#75737b;letter-spacing:0.69px;top:709.8px;left:728.5px;width:1200px;text-align:center;">$3,000.00</div>
<div class="t" style="font-size:27.5px;color:#4d4b54;letter-spacing:0.28px;top:706.5px;left:1028.5px;width:1200px;text-align:center;">Not Posted</div>
<div class="r" style="left:1807px;top:692.7249999999999px;width:91px;height:56px;background:#fdfdfd;border-radius:9px;box-shadow:0 0 0 1px rgba(0,0,0,0.02),0 2px 4px rgba(0,0,0,0.08);"></div>
<div class="t" style="font-size:22.6px;color:#302e39;letter-spacing:0.5px;top:710.9px;-webkit-text-stroke:0.1px #302e39;left:1253.3000000000002px;width:1200px;text-align:center;">Post</div>
<svg class="r" style="left:1932px;top:705.1px;width:28px;height:30px" viewBox="0 0 28 30" fill="none" stroke="#ef4444" stroke-width="2.3" stroke-linejoin="round"><path d="M2.8 8.1H25.9"/><path d="M9.8 8V5.6a2.4 2.4 0 0 1 2.4-2.4h4.6a2.4 2.4 0 0 1 2.4 2.4V8"/><path d="M5.6 8.1V24.8a2 2 0 0 0 2 2h14a2 2 0 0 0 2-2V8.1"/><path d="M11.6 13.2v8.8M16.9 13.2v8.8"/></svg>
<div class="r" style="left:0px;top:763.94px;width:2015px;height:1px;background:#dcdcdf;"></div>
<div class="r" style="left:36px;top:794.655px;width:27px;height:27px;border:2.2px solid #6c6a72;border-radius:4px;background:#fdfdfd;box-sizing:border-box;"></div>
<div class="t" style="font-size:26.1px;color:#6c6a72;letter-spacing:0px;top:794.6px;left:-423px;width:1200px;text-align:center;">9</div>
<div class="t" style="font-size:26.7px;color:#6f6d76;letter-spacing:1.045px;top:794.1px;left:-72.87727272727284px;width:1200px;text-align:center;">2024-02-01 - 2024-02-29</div>
<div class="t" style="font-size:23.6px;color:#75737b;letter-spacing:0.33px;top:797.2px;left:-241px;width:1200px;text-align:right;">$750.00</div>
<svg class="r" style="left:990.5px;top:791.7px;width:32px;height:32px" viewBox="0 0 24 24" fill="none" stroke="#4d4b54" stroke-width="1.6" stroke-linejoin="round" stroke-linecap="round"><path d="M16.9 3.6a2.1 2.1 0 0 1 3 3L7.2 19.3 3 20.8l1.4-4.1z"/><path d="M15.2 5.3l3 3"/></svg>
<svg class="r" style="left:1054px;top:793.2px;width:30px;height:30px" viewBox="0 0 30 30" fill="none" stroke="#4d4b54" stroke-width="2.2"><circle cx="15" cy="15" r="12.2"/><path d="M15 13v8" stroke-width="2.6"/><circle cx="15" cy="9.3" r="1.4" fill="#4d4b54" stroke="none"/></svg>
<div class="t" style="font-size:23.6px;color:#75737b;letter-spacing:0.69px;top:797.2px;left:728.5px;width:1200px;text-align:center;">$2,250.00</div>
<div class="t" style="font-size:27.5px;color:#4d4b54;letter-spacing:0.28px;top:793.9px;left:1028.5px;width:1200px;text-align:center;">Not Posted</div>
<div class="r" style="left:1807px;top:780.155px;width:91px;height:56px;background:#fdfdfd;border-radius:9px;box-shadow:0 0 0 1px rgba(0,0,0,0.02),0 2px 4px rgba(0,0,0,0.08);"></div>
<div class="t" style="font-size:22.6px;color:#302e39;letter-spacing:0.5px;top:798.4px;-webkit-text-stroke:0.1px #302e39;left:1253.3000000000002px;width:1200px;text-align:center;">Post</div>
<svg class="r" style="left:1932px;top:792.6px;width:28px;height:30px" viewBox="0 0 28 30" fill="none" stroke="#ef4444" stroke-width="2.3" stroke-linejoin="round"><path d="M2.8 8.1H25.9"/><path d="M9.8 8V5.6a2.4 2.4 0 0 1 2.4-2.4h4.6a2.4 2.4 0 0 1 2.4 2.4V8"/><path d="M5.6 8.1V24.8a2 2 0 0 0 2 2h14a2 2 0 0 0 2-2V8.1"/><path d="M11.6 13.2v8.8M16.9 13.2v8.8"/></svg>
<div class="r" style="left:0px;top:851.3700000000001px;width:2015px;height:1px;background:#dcdcdf;"></div>
</div>
<div class="r" style="left:2519px;top:850px;width:28px;height:792px;background:#fafafa;border-left:1px solid #e6e6e8;box-sizing:border-box;"></div>
<div class="r" style="left:2526px;top:856px;width:16px;height:481px;background:#c9c8cd;border-radius:8px;"></div>
<div class="r" style="left:504px;top:1642px;width:2043px;height:28px;background:#fafafa;border-top:1px solid #e6e6e8;border-right:1px solid #e6e6e8;border-bottom:1px solid #ececee;box-sizing:border-box;"></div>
<div class="t" style="font-size:25.5px;color:#ee4446;letter-spacing:-0.3px;top:1743.5px;-webkit-text-stroke:0.1px #ee4446;left:503.5px;">DELETE</div>
<div class="r" style="left:1933px;top:1721px;width:308px;height:70px;background:#8b8a91;border-radius:8px;box-shadow:0 2px 5px rgba(0,0,0,0.12);"></div>
<div class="t" style="font-size:26px;color:#f8f8f9;letter-spacing:-0.28px;top:1743.5px;-webkit-text-stroke:0.15px #f8f8f9;left:1487.1999999999998px;width:1200px;text-align:center;">AUTO RECONCILE</div>
<div class="r" style="left:2277px;top:1721px;width:293px;height:70px;background:#6466f1;border-radius:8px;box-shadow:0 2px 5px rgba(0,0,0,0.12);"></div>
<div class="t" style="font-size:26px;color:#ffffff;letter-spacing:-0.05px;top:1743.5px;-webkit-text-stroke:0.15px #ffffff;left:1823.5px;width:1200px;text-align:center;">SAVE SCHEDULE</div>
</body></html>
